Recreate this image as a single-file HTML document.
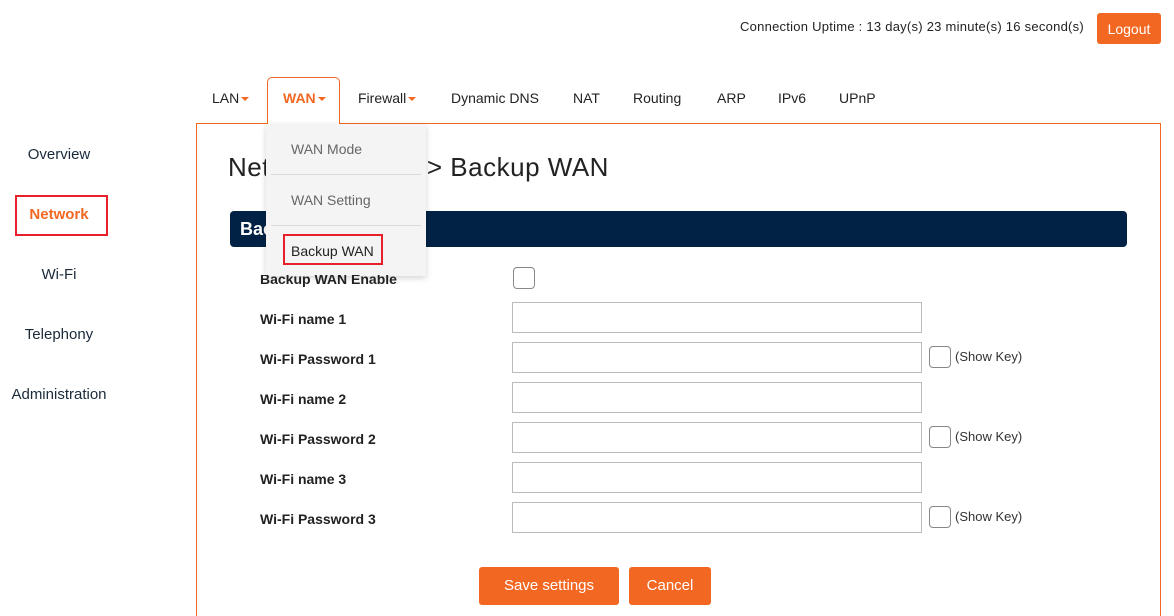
<!DOCTYPE html>
<html><head><style>
html,body{margin:0;width:1174px;height:616px;overflow:hidden}
body{background:#fff;font-family:"Liberation Sans",sans-serif;position:relative;color:#222}
.a{position:absolute}
.tab{position:absolute;top:90px;font-size:14px;color:#222}
.car{display:inline-block;width:0;height:0;border-left:4px solid transparent;border-right:4px solid transparent;border-top:4px solid #f26722;vertical-align:middle;margin-left:2px}
.side{position:absolute;width:118px;text-align:center;font-size:15px;color:#1a2a3a}
.lbl{position:absolute;left:260px;font-size:14px;font-weight:bold;color:#222}
.inp{position:absolute;left:512px;width:408px;height:29px;border:1px solid #bbb;background:#fff}
.cb{position:absolute;width:20px;height:20px;border:1px solid #888;border-radius:4px;background:#fff}
.sk{position:absolute;left:955px;font-size:13px;color:#333}
.btn{position:absolute;top:567px;height:38px;background:#f26722;color:#fff;font-size:15px;border-radius:3px;text-align:center;line-height:38px}
</style></head><body>
<div class="a" style="left:740px;top:19px;font-size:13px;color:#222;letter-spacing:0.25px">Connection Uptime : 13 day(s) 23 minute(s) 16 second(s)</div>
<div class="a" style="left:1097px;top:13px;width:64px;height:31px;background:#f26722;color:#fff;border-radius:3px;font-size:14px;text-align:center;line-height:33px">Logout</div>

<div class="a" style="left:196px;top:123px;width:963px;height:492px;border:1px solid #f26722;border-bottom:none"></div>
<div class="a" style="left:267px;top:77px;width:71px;height:47px;border:1px solid #f26722;border-bottom:none;border-radius:5px 5px 0 0;background:#fff"></div>

<div class="tab" style="left:212px">LAN<span class="car"></span></div>
<div class="tab" style="left:283px;color:#f26722;font-weight:bold">WAN<span class="car"></span></div>
<div class="tab" style="left:358px">Firewall<span class="car"></span></div>
<div class="tab" style="left:451px">Dynamic DNS</div>
<div class="tab" style="left:573px">NAT</div>
<div class="tab" style="left:633px">Routing</div>
<div class="tab" style="left:717px">ARP</div>
<div class="tab" style="left:778px">IPv6</div>
<div class="tab" style="left:839px">UPnP</div>

<div class="side" style="left:0;top:146px">Overview</div>
<div class="a" style="left:15px;top:195px;width:89px;height:37px;border:2px solid #e8202a"></div>
<div class="side" style="left:0;top:206px;color:#f26722;font-weight:bold">Network</div>
<div class="side" style="left:0;top:266px">Wi-Fi</div>
<div class="side" style="left:0;top:326px">Telephony</div>
<div class="side" style="left:0;top:386px">Administration</div>

<div class="a" style="left:228px;top:152px;font-size:26px;color:#222;letter-spacing:0.5px">Network &gt; WAN &gt; Backup WAN</div>
<div class="a" style="left:230px;top:211px;width:897px;height:36px;background:#012244;border-radius:4px;color:#fff;font-weight:bold;font-size:18px;line-height:36px;padding-left:10px;box-sizing:border-box">Backup WAN</div>

<div class="a" style="left:266px;top:124px;width:160px;height:152px;background:#f4f4f4;box-shadow:0 2px 6px rgba(0,0,0,.18)">
<div class="a" style="left:25px;top:17px;font-size:14px;color:#666">WAN Mode</div>
<div class="a" style="left:5px;top:50px;width:150px;height:1px;background:#ddd"></div>
<div class="a" style="left:25px;top:68px;font-size:14px;color:#666">WAN Setting</div>
<div class="a" style="left:5px;top:101px;width:150px;height:1px;background:#ddd"></div>
<div class="a" style="left:17px;top:110px;width:100px;height:31px;border:2px solid #e8202a;box-sizing:border-box"></div>
<div class="a" style="left:25px;top:119px;font-size:14px;color:#222">Backup WAN</div>
</div>

<div class="lbl" style="top:271px;clip-path:inset(4px 0 0 0)">Backup WAN Enable</div>
<div class="cb" style="left:513px;top:267px"></div>
<div class="lbl" style="top:311px">Wi-Fi name 1</div><div class="inp" style="top:302px"></div>
<div class="lbl" style="top:351px">Wi-Fi Password 1</div><div class="inp" style="top:342px"></div><div class="cb" style="left:929px;top:346px"></div><div class="sk" style="top:349px">(Show Key)</div>
<div class="lbl" style="top:391px">Wi-Fi name 2</div><div class="inp" style="top:382px"></div>
<div class="lbl" style="top:431px">Wi-Fi Password 2</div><div class="inp" style="top:422px"></div><div class="cb" style="left:929px;top:426px"></div><div class="sk" style="top:429px">(Show Key)</div>
<div class="lbl" style="top:471px">Wi-Fi name 3</div><div class="inp" style="top:462px"></div>
<div class="lbl" style="top:511px">Wi-Fi Password 3</div><div class="inp" style="top:502px"></div><div class="cb" style="left:929px;top:506px"></div><div class="sk" style="top:509px">(Show Key)</div>

<div class="btn" style="left:479px;width:140px">Save settings</div>
<div class="btn" style="left:629px;width:82px">Cancel</div>
</body></html>
